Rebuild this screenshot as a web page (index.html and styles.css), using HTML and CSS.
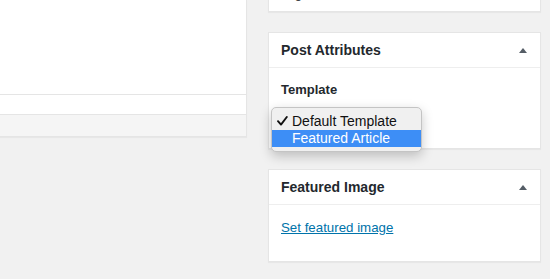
FILE: index.html
```html
<!DOCTYPE html>
<html lang="en">

<head>
  <meta charset="UTF-8">
  <meta name="viewport" content="width=device-width, initial-scale=1.0">
  <title>Edit Post</title>
  <link rel="stylesheet" href="styles.css">
</head>

<body>
  <div class="wrap">
    <!-- Main editor column -->
    <div class="editor">
      <div class="editor-area"></div>
      <div class="status-row"></div>
      <div class="footer-bar"></div>
    </div>

    <!-- Sidebar meta boxes -->
    <div class="sidebar">
      <div class="postbox cut">
        <div class="inside">
          <p class="cut-text">Tags</p>
        </div>
      </div>

      <div class="postbox">
        <div class="hndle">
          <span>Post Attributes</span>
          <svg class="toggle" width="8" height="5" viewBox="0 0 8 5"><path d="M4 0 L8 5 L0 5 Z" fill="#555d66"/></svg>
        </div>
        <div class="inside">
          <p class="label">Template</p>
          <div class="select-wrap">
            <!-- the open native menu covers the select -->
            <div class="select"></div>
            <ul class="menu">
              <li class="checked">
                <svg class="check" width="11" height="10" viewBox="0 0 11 10"><path d="M1 5.2 L4 8.6 L9.8 1" fill="none" stroke="#111" stroke-width="1.9" stroke-linecap="round" stroke-linejoin="round"/></svg>
                Default Template
              </li>
              <li class="active">Featured Article</li>
            </ul>
          </div>
        </div>
      </div>

      <div class="postbox">
        <div class="hndle">
          <span>Featured Image</span>
          <svg class="toggle" width="8" height="5" viewBox="0 0 8 5"><path d="M4 0 L8 5 L0 5 Z" fill="#555d66"/></svg>
        </div>
        <div class="inside image-box">
          <a href="#" class="set-image">Set featured image</a>
        </div>
      </div>
    </div>
  </div>
</body>

</html>
```

FILE: styles.css
```css
body {
  margin: 0;
  background-color: #f1f1f1;
  font-family: 'Liberation Sans', Arial, sans-serif;
  color: #23282d;
  overflow: hidden;
}

.wrap {
  display: flex;
  align-items: flex-start;
}

.editor {
  width: 246px;
  background-color: white;
  border-right: 1px solid #e5e5e5;
  border-bottom: 1px solid #e5e5e5;
  box-shadow: 0 1px 1px rgba(0, 0, 0, 0.04);
}

.editor-area {
  height: 94px;
  border-bottom: 1px solid #e5e5e5;
}

.status-row {
  height: 19px;
  border-bottom: 1px solid #e5e5e5;
}

.footer-bar {
  height: 21px;
  background-color: #f5f5f5;
}

.sidebar {
  width: 273px;
  margin-left: 21px;
}

.postbox {
  background-color: white;
  border: 1px solid #e5e5e5;
  box-shadow: 0 1px 1px rgba(0, 0, 0, 0.04);
  margin-bottom: 20px;
}

.postbox.cut {
  margin-top: -27px;
}

.cut-text {
  margin: 0;
  padding: 11px 12px 8px;
  font-size: 13px;
  line-height: 18px;
}

.cut .inside {
  padding: 0;
}

.hndle {
  display: flex;
  justify-content: space-between;
  align-items: center;
  padding: 8px 13px 8px 12px;
  font-size: 14px;
  font-weight: bold;
  line-height: 18px;
  border-bottom: 1px solid #eee;
}

.toggle {
  display: block;
}

.inside {
  padding: 13px 12px 13px;
}

.label {
  margin: 0 0 8px;
  font-size: 13px;
  font-weight: bold;
  line-height: 18px;
}

.select-wrap {
  position: relative;
}

.select {
  height: 26px;
  width: 130px;
  border: 1px solid #ddd;
}

.menu {
  position: absolute;
  left: -10px;
  top: 0;
  width: 149px;
  margin: 0;
  padding: 5px 0 4px;
  list-style: none;
  background-color: #f0f0f0;
  border: 1px solid #c4c4c4;
  border-radius: 5px;
  box-shadow: 0 4px 12px rgba(0, 0, 0, 0.22);
  font-size: 14px;
  line-height: 17px;
  color: #111;
}

.menu li {
  position: relative;
  padding-left: 20px;
}

.check {
  position: absolute;
  left: 5px;
  top: 3px;
}

.menu li.active {
  background-color: #3d8ef6;
  color: white;
}

.image-box {
  padding: 13px 12px 24px;
  line-height: 18px;
}

.set-image {
  font-size: 13.3px;
  color: #0073aa;
  text-decoration: underline;
}
```
